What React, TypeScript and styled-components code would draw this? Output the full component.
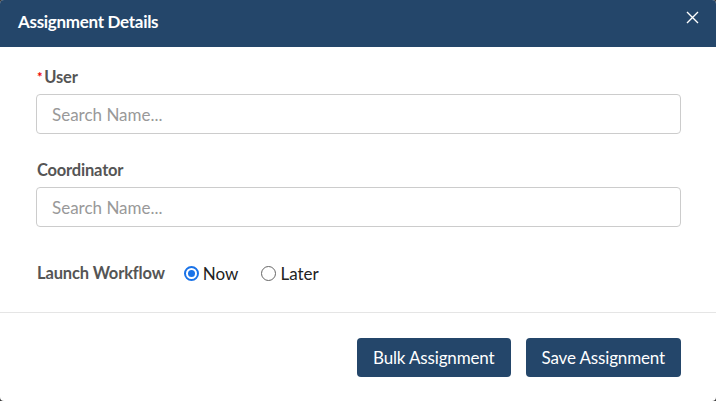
import React from "react";
import styled, { createGlobalStyle } from "styled-components";

const Global = createGlobalStyle`
  html, body { margin: 0; padding: 0; background: #3a3a3a; }
  body { font-family: Lato, "Open Sans", sans-serif; }
  * { box-sizing: border-box; }
`;

const Modal = styled.div`
  width: 716px;
  height: 401px;
  background: #fff;
  border-radius: 4px;
  overflow: hidden;
  display: flex;
  flex-direction: column;
`;

const Header = styled.div`
  height: 47px;
  background: #24466a;
  display: flex;
  align-items: center;
  justify-content: space-between;
  padding: 0 18px 5px 18px;
`;

const Title = styled.h2`
  margin: 0;
  color: #fff;
  font-size: 17px;
  font-weight: 700;
  letter-spacing: -0.3px;
`;

const Close = styled.button`
  border: none;
  background: none;
  padding: 0;
  margin-top: -7px;
  margin-right: -1px;
  width: 14px;
  height: 14px;
  display: flex;
  align-items: center;
  justify-content: center;
  cursor: pointer;
`;

const Body = styled.div`
  padding: 21px 35px 0 36px;
  display: flex;
  flex-direction: column;
  flex: 1;
`;

const Field = styled.div`
  display: flex;
  flex-direction: column;
  gap: 8px;
  margin-bottom: 27px;
`;

const Label = styled.label`
  font-size: 16.5px;
  font-weight: 700;
  color: #555;
  display: flex;
  align-items: flex-start;
  line-height: 18px;
  padding-left: 1px;
  letter-spacing: -0.2px;
`;

const Req = styled.span`
  color: #e00;
  font-size: 13px;
  margin-right: 2px;
`;

const Input = styled.input`
  width: 100%;
  height: 40px;
  border: 1px solid #ccc;
  border-radius: 4px;
  padding: 0 15px;
  font-family: Lato, sans-serif;
  font-size: 17px;
  color: #333;
  outline: none;
  &::placeholder { color: #999; }
`;

const RadioRow = styled.div`
  display: flex;
  align-items: center;
  margin-top: 9px;
  height: 20px;
  padding-left: 1px;
`;

const RowLabel = styled.span`
  font-size: 16.5px;
  font-weight: 700;
  color: #555;
  margin-right: 19px;
  letter-spacing: -0.15px;
`;

const Option = styled.label`
  display: flex;
  align-items: center;
  font-size: 17px;
  color: #222;
  margin-right: 23px;
  gap: 4px;
`;

const Radio = styled.span<{ $checked?: boolean }>`
  width: 15px;
  height: 15px;
  border-radius: 50%;
  border: ${p => (p.$checked ? "2px solid #1a73e8" : "1px solid #666")};
  display: flex;
  align-items: center;
  justify-content: center;
  &::after {
    content: "";
    display: ${p => (p.$checked ? "block" : "none")};
    width: 7px;
    height: 7px;
    border-radius: 50%;
    background: #1a73e8;
  }
`;

const Divider = styled.hr`
  margin: 0;
  border: none;
  border-top: 1px solid #e5e5e5;
`;

const Footer = styled.div`
  display: flex;
  justify-content: flex-end;
  gap: 15px;
  padding: 25px 35px 24px 0;
`;

const Button = styled.button`
  background: #24466a;
  color: #fff;
  border: none;
  border-radius: 4px;
  height: 39px;
  padding: 0 16px;
  font-family: Lato, sans-serif;
  font-size: 17px;
  letter-spacing: -0.15px;
  cursor: pointer;
`;

export default function App() {
  return (
    <>
      <Global />
      <Modal>
        <Header>
          <Title>Assignment Details</Title>
          <Close aria-label="Close">
            <svg width="13" height="13" viewBox="0 0 13 13">
              <path d="M1 1L12 12M12 1L1 12" stroke="#fff" strokeWidth="1.4" />
            </svg>
          </Close>
        </Header>
        <Body>
          <Field>
            <Label><Req>*</Req>User</Label>
            <Input placeholder="Search Name..." />
          </Field>
          <Field>
            <Label>Coordinator</Label>
            <Input placeholder="Search Name..." />
          </Field>
          <RadioRow>
            <RowLabel>Launch Workflow</RowLabel>
            <Option><Radio $checked />Now</Option>
            <Option><Radio />Later</Option>
          </RadioRow>
        </Body>
        <Divider />
        <Footer>
          <Button>Bulk Assignment</Button>
          <Button>Save Assignment</Button>
        </Footer>
      </Modal>
    </>
  );
}
